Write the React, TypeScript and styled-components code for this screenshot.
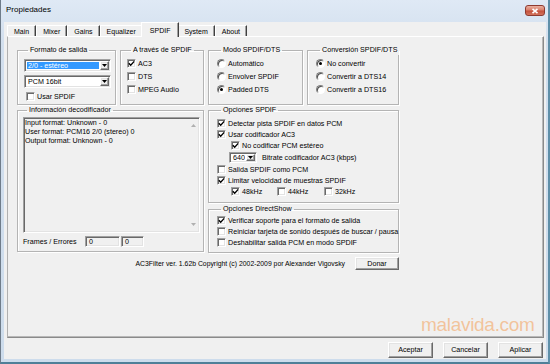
import React from 'react';
import styled, { createGlobalStyle, css } from 'styled-components';

const FONT = `"Liberation Sans", Arial, sans-serif`;

const GlobalStyle = createGlobalStyle`
  html, body { margin: 0; padding: 0; background: #d3e0ee; }
  body { font-family: ${FONT}; font-size: 7.15px; color: #000; }
  * { box-sizing: border-box; }
`;

const sunken = css`
  border: 1px solid;
  border-color: #a0a0a0 #fff #fff #a0a0a0;
  box-shadow: inset 1px 1px 0 #696969, inset -1px -1px 0 #e3e3e3;
`;

const raised = css`
  border: 1px solid;
  border-color: #fff #696969 #696969 #fff;
  box-shadow: inset -1px -1px 0 #a0a0a0, inset 1px 1px 0 #e3e3e3;
`;

const Window = styled.div`
  position: relative;
  width: 550px;
  height: 364px;
  display: flex;
  flex-direction: column;
  background: linear-gradient(180deg, #dfe9f5 0%, #d2dfee 12%, #cddcec 100%);
  border-left: 1px solid #6f7c8a;
  border-right: 2px solid #5f8fa8;
  border-bottom: 2px solid #4f7f98;
  overflow: hidden;
`;

const TitleBar = styled.div`
  height: 22px;
  flex: none;
  display: flex;
  align-items: flex-start;
  justify-content: space-between;
  padding: 0 3px 0 5px;
`;

const Title = styled.span`
  font-size: 8px;
  line-height: 20px;
`;

const CloseBtn = styled.div`
  margin-top: 5px;
  width: 20px;
  height: 11px;
  border-radius: 3px;
  border: 1px solid #8e3a30;
  background: linear-gradient(#eab0a0, #d9806c 45%, #c4503c 55%, #d2735c);
  display: flex;
  align-items: center;
  justify-content: center;
`;

const Client = styled.div`
  flex: 1;
  display: flex;
  flex-direction: column;
  margin: 0 2px 3px 3px;
  background: #f0f0f0;
`;

const TabStrip = styled.div`
  height: 14px;
  flex: none;
  display: flex;
  align-items: flex-end;
  padding-left: 3px;
  position: relative;
  z-index: 1;
`;

const Tab = styled.div<{ $active?: boolean }>`
  position: relative;
  z-index: ${(p) => (p.$active ? 2 : 1)};
  height: ${(p) => (p.$active ? 15 : 11)}px;
  margin: 0 ${(p) => (p.$active ? -2 : 0)}px ${(p) => (p.$active ? -1 : 0)}px;
  padding: 0 ${(p) => (p.$active ? 8 : 6)}px;
  display: flex;
  align-items: center;
  font-size: 7px;
  background: #f0f0f0;
  border-top: 1px solid #fff;
  border-left: 1px solid #fff;
  border-right: 1px solid #404040;
  box-shadow: inset -1px 0 0 #a0a0a0;
`;

const Panel = styled.div`
  flex: 1;
  margin: 0 2px 0 3px;
  border: 1px solid;
  border-color: #fff #8a8a8a #8a8a8a #b0b0b0;
  box-shadow: inset -1px -1px 0 #b8b8b8;
  padding: 9px 0 0 9px;
`;

const Content = styled.div`
  display: grid;
  grid-template-columns: 187px 191px;
  column-gap: 4px;
  align-items: start;
`;

const Column = styled.div`
  display: flex;
  flex-direction: column;
`;

const TopRow = styled.div`
  display: flex;
  gap: 4px;
`;

const GroupBox = styled.fieldset<{ $w?: number; $h: number; $pl: number; $mt?: number }>`
  margin: ${(p) => p.$mt ?? 0}px 0 0 0;
  padding: 0 3px 0 ${(p) => p.$pl}px;
  width: ${(p) => (p.$w ? `${p.$w}px` : 'auto')};
  height: ${(p) => p.$h}px;
  min-width: 0;
  border: 1px solid #b4b4b4;
  box-shadow: inset 1px 1px 0 #fff, 1px 1px 0 #fff;
  display: flex;
  flex-direction: column;
`;

const Legend = styled.legend`
  padding: 0 2px;
  margin-left: 4px;
  line-height: 9px;
  font-size: 7.15px;
  white-space: nowrap;
`;

const Rows = styled.div<{ $mt: number }>`
  margin-top: ${(p) => p.$mt}px;
  display: flex;
  flex-direction: column;
`;

const Row = styled.div<{ $h?: number; $indent?: number }>`
  height: ${(p) => p.$h ?? 11}px;
  margin-left: ${(p) => p.$indent ?? 0}px;
  display: flex;
  align-items: center;
  white-space: nowrap;
`;

const CheckBox = styled.span`
  ${sunken};
  flex: none;
  width: 9px;
  height: 9px;
  margin-right: 2px;
  background: #fff;
  display: flex;
  align-items: center;
  justify-content: center;
`;

const RadioDot = styled.span`
  flex: none;
  width: 9px;
  height: 9px;
  margin-right: 2px;
  border-radius: 50%;
  border: 1px solid;
  border-color: #808080 #fff #fff #808080;
  box-shadow: inset 1px 1px 0 #505050;
  background: #fff;
  display: flex;
  align-items: center;
  justify-content: center;
`;

const Dot = styled.span`
  width: 3px;
  height: 3px;
  border-radius: 50%;
  background: #000;
`;

const Combo = styled.div<{ $w: number; $h: number }>`
  ${sunken};
  flex: none;
  width: ${(p) => p.$w}px;
  height: ${(p) => p.$h}px;
  background: #fff;
  display: flex;
  padding: 1px;
`;

const ComboText = styled.div<{ $sel?: boolean }>`
  flex: 1;
  margin: 1px;
  padding-left: 1px;
  display: flex;
  align-items: center;
  white-space: nowrap;
  overflow: hidden;
  background: ${(p) => (p.$sel ? '#3399ff' : 'transparent')};
  color: ${(p) => (p.$sel ? '#fff' : '#000')};
`;

const DropBtn = styled.div`
  ${raised};
  flex: none;
  width: 9px;
  background: #f0f0f0;
  display: flex;
  align-items: center;
  justify-content: center;
`;

const Label = styled.span<{ $ml?: number }>`
  margin-left: ${(p) => p.$ml ?? 0}px;
  white-space: nowrap;
`;

const Copyright = styled.span`
  font-size: 6.85px;
  white-space: nowrap;
`;

const KhzItem = styled.div<{ $w?: number }>`
  width: ${(p) => p.$w ?? 46}px;
  display: flex;
  align-items: center;
`;

const InfoArea = styled.div`
  ${sunken};
  margin-top: 2px;
  width: 177px;
  height: 116px;
  background: #f0f0f0;
  display: flex;
`;

const InfoText = styled.div`
  flex: 1;
  padding: 1px 0 0 1px;
  line-height: 9px;
  white-space: pre;
`;

const ScrollBar = styled.div`
  width: 10px;
  margin: 2px 1px 2px 0;
  display: flex;
  flex-direction: column;
  justify-content: space-between;
  align-items: center;
  padding: 4px 0;
`;

const FramesRow = styled.div`
  margin-top: 3px;
  height: 11px;
  display: flex;
  align-items: center;
`;

const FramesLabel = styled.span`
  width: 62px;
  white-space: nowrap;
`;

const Edit = styled.div<{ $w: number }>`
  ${sunken};
  width: ${(p) => p.$w}px;
  height: 11px;
  margin-right: 1px;
  background: #f0f0f0;
  padding-left: 3px;
  display: flex;
  align-items: center;
`;

const Footer = styled.div`
  grid-column: 1 / -1;
  margin-top: 4px;
  display: flex;
  justify-content: flex-end;
  align-items: center;
  gap: 10px;
`;

const Button = styled.div<{ $w: number; $h: number }>`
  ${raised};
  width: ${(p) => p.$w}px;
  height: ${(p) => p.$h}px;
  background: #f0f0f0;
  display: flex;
  align-items: center;
  justify-content: center;
  white-space: nowrap;
`;

const ButtonBar = styled.div`
  flex: none;
  display: flex;
  justify-content: flex-end;
  gap: 10px;
  padding: 4px 3px 1px 0;
`;

const Watermark = styled.div`
  position: absolute;
  left: 420px;
  top: 314px;
  font-family: ${FONT};
  font-size: 19px;
  letter-spacing: -0.3px;
  color: rgba(244, 150, 70, 0.5);
  pointer-events: none;
`;

const Tick = () => (
  <svg width="7" height="7" viewBox="0 0 7 7">
    <polyline points="0.8,3.2 2.7,5.2 6.2,1.4" fill="none" stroke="#000" strokeWidth="1.4" />
  </svg>
);

const Arrow = ({ up, color = '#000' }: { up?: boolean; color?: string }) => (
  <svg width="5" height="3" viewBox="0 0 5 3">
    <path d={up ? 'M0 3H5L2.5 0Z' : 'M0 0H5L2.5 3Z'} fill={color} />
  </svg>
);

const Check = ({ on, children, indent, h }: { on?: boolean; children: React.ReactNode; indent?: number; h?: number }) => (
  <Row $indent={indent} $h={h}>
    <CheckBox>{on && <Tick />}</CheckBox>
    <Label>{children}</Label>
  </Row>
);

const Radio = ({ on, children }: { on?: boolean; children: React.ReactNode }) => (
  <Row $h={13}>
    <RadioDot>{on && <Dot />}</RadioDot>
    <Label>{children}</Label>
  </Row>
);

const Select = ({ w, h, text, sel }: { w: number; h: number; text: string; sel?: boolean }) => (
  <Combo $w={w} $h={h}>
    <ComboText $sel={sel}>{text}</ComboText>
    <DropBtn>
      <Arrow />
    </DropBtn>
  </Combo>
);

export default function App() {
  const tabs = ['Main', 'Mixer', 'Gains', 'Equalizer', 'SPDIF', 'System', 'About'];
  return (
    <>
      <GlobalStyle />
      <Window>
        <TitleBar>
          <Title>Propiedades</Title>
          <CloseBtn>
            <svg width="8" height="6" viewBox="0 0 8 6">
              <path d="M1.5 0.8L6.5 5.2M6.5 0.8L1.5 5.2" stroke="#fff" strokeWidth="1.6" />
            </svg>
          </CloseBtn>
        </TitleBar>
        <Client>
          <TabStrip>
            {tabs.map((t) => (
              <Tab key={t} $active={t === 'SPDIF'}>
                {t}
              </Tab>
            ))}
          </TabStrip>
          <Panel>
            <Content>
              <Column>
                <TopRow>
                  <GroupBox $w={99} $h={59} $pl={6}>
                    <Legend>Formato de salida</Legend>
                    <Rows $mt={4}>
                      <Select w={87} h={13} text="2/0 - estéreo" sel />
                      <Row $h={3} />
                      <Select w={87} h={13} text="PCM 16bit" />
                      <Row $h={3} />
                      <Check indent={2} h={11}>Usar SPDIF</Check>
                    </Rows>
                  </GroupBox>
                  <GroupBox $w={84} $h={59} $pl={6}>
                    <Legend>A través de SPDIF</Legend>
                    <Rows $mt={2}>
                      <Check on h={13}>AC3</Check>
                      <Check h={13}>DTS</Check>
                      <Check h={13}>MPEG Audio</Check>
                    </Rows>
                  </GroupBox>
                </TopRow>
                <GroupBox $h={146} $pl={5} $mt={1}>
                  <Legend>Información decodificador</Legend>
                  <InfoArea>
                    <InfoText>
                      {'Input format: Unknown - 0\nUser format: PCM16 2/0 (stereo) 0\nOutput format: Unknown - 0'}
                    </InfoText>
                    <ScrollBar>
                      <Arrow up color="#b0b0b0" />
                      <Arrow color="#b0b0b0" />
                    </ScrollBar>
                  </InfoArea>
                  <FramesRow>
                    <FramesLabel>Frames / Errores</FramesLabel>
                    <Edit $w={35}>0</Edit>
                    <Edit $w={23}>0</Edit>
                  </FramesRow>
                </GroupBox>
              </Column>
              <Column>
                <TopRow>
                  <GroupBox $w={95} $h={59} $pl={8}>
                    <Legend>Modo SPDIF/DTS</Legend>
                    <Rows $mt={2}>
                      <Radio>Automático</Radio>
                      <Radio>Envolver SPDIF</Radio>
                      <Radio on>Padded DTS</Radio>
                    </Rows>
                  </GroupBox>
                  <GroupBox $w={92} $h={59} $pl={8}>
                    <Legend>Conversión SPDIF/DTS</Legend>
                    <Rows $mt={2}>
                      <Radio on>No convertir</Radio>
                      <Radio>Convertir a DTS14</Radio>
                      <Radio>Convertir a DTS16</Radio>
                    </Rows>
                  </GroupBox>
                </TopRow>
                <GroupBox $h={97} $pl={8} $mt={1}>
                  <Legend>Opciones SPDIF</Legend>
                  <Rows $mt={3}>
                    <Check on>Detectar pista SPDIF en datos PCM</Check>
                    <Check on>Usar codificador AC3</Check>
                    <Check on indent={14}>No codificar PCM estéreo</Check>
                    <Row $h={13} $indent={12}>
                      <Select w={28} h={11} text="640" />
                      <Label $ml={5}>Bitrate codificador AC3 (kbps)</Label>
                    </Row>
                    <Check>Salida SPDIF como PCM</Check>
                    <Check on>Limitar velocidad de muestras SPDIF</Check>
                    <Row $indent={14}>
                      <KhzItem>
                        <CheckBox>
                          <Tick />
                        </CheckBox>
                        <Label>48kHz</Label>
                      </KhzItem>
                      <KhzItem $w={47}>
                        <CheckBox />
                        <Label>44kHz</Label>
                      </KhzItem>
                      <KhzItem>
                        <CheckBox />
                        <Label>32kHz</Label>
                      </KhzItem>
                    </Row>
                  </Rows>
                </GroupBox>
                <GroupBox $h={48} $pl={8} $mt={2}>
                  <Legend>Opciones DirectShow</Legend>
                  <Rows $mt={1}>
                    <Check on>Verificar soporte para el formato de salida</Check>
                    <Check>Reiniciar tarjeta de sonido después de buscar / pausa</Check>
                    <Check>Deshabilitar salida PCM en modo SPDIF</Check>
                  </Rows>
                </GroupBox>
              </Column>
              <Footer>
                <Copyright>AC3Filter ver. 1.62b Copyright (c) 2002-2009 por Alexander Vigovsky</Copyright>
                <Button $w={44} $h={13}>Donar</Button>
              </Footer>
            </Content>
          </Panel>
          <ButtonBar>
            <Button $w={45} $h={16}>Aceptar</Button>
            <Button $w={45} $h={16}>Cancelar</Button>
            <Button $w={45} $h={16}>Aplicar</Button>
          </ButtonBar>
        </Client>
        <Watermark>malavida.com</Watermark>
      </Window>
    </>
  );
}
